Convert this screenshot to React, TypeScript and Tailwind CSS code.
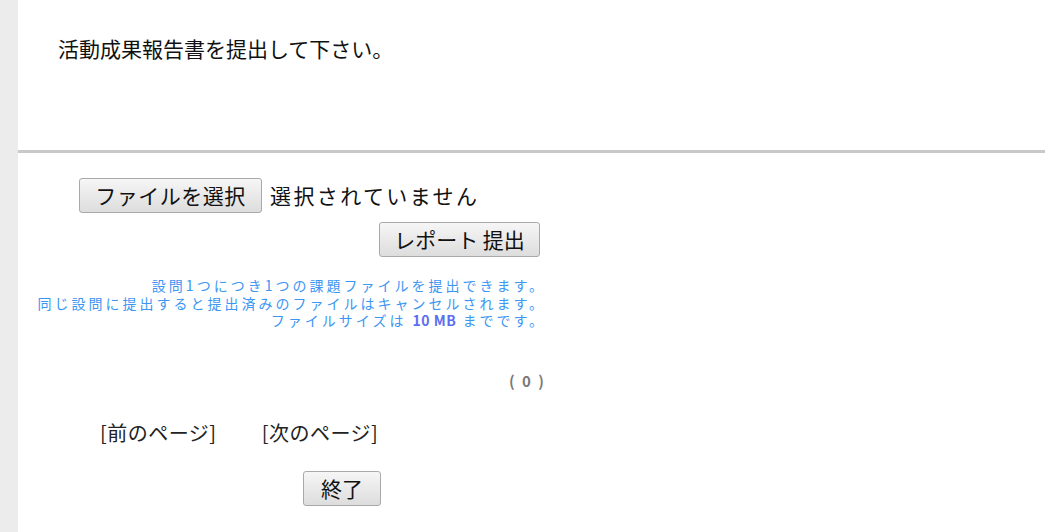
import React from "react";

const jp = { fontFamily: '"Noto Sans CJK JP", "Noto Sans", sans-serif' };

function Btn({ children, className = "" }: { children: React.ReactNode; className?: string }) {
  return (
    <button
      type="button"
      style={jp}
      className={
        "h-[35px] rounded-[3px] border border-[#a9a9a9] bg-gradient-to-b from-[#f6f6f6] to-[#dddddd] text-[21px] leading-none text-[#111] " +
        className
      }
    >
      {children}
    </button>
  );
}

export default function App() {
  return (
    <div className="flex min-h-[532px] w-[1045px] bg-white" style={jp}>
      <div className="w-[18px] shrink-0 bg-[#ececec]" />
      <div className="flex-1">
        <div className="h-[150px] pl-[40px] pt-[34px] text-[21px] leading-[28px] text-[#111]">
          活動成果報告書を提出して下さい。
        </div>
        <div className="h-[3px] bg-[#c9c9c9]" />
        <div className="w-[528px]">
          <div className="mt-[25px] flex items-center pl-[61px]">
            <Btn className="w-[183px] tracking-[0.5px]">ファイルを選択</Btn>
            <span className="ml-[8px] text-[21px] tracking-[2.4px] text-[#111]">選択されていません</span>
          </div>
          <div className="mt-[9px] flex justify-end pr-[6px]">
            <Btn className="w-[161px]">レポート 提出</Btn>
          </div>
          <div className="mt-[20px] text-right text-[14px] leading-[17.5px] tracking-[3px] text-[#3d96f2]">
            <div>設問1つにつき1つの課題ファイルを提出できます。</div>
            <div>同じ設問に提出すると提出済みのファイルはキャンセルされます。</div>
            <div>
              ファイルサイズは <span className="font-bold tracking-[0.5px] text-[#5c6ef0]">10 MB</span> までです。
            </div>
          </div>
          <div className="mt-[42px] text-right text-[15px] font-bold leading-[18px] tracking-[2px] text-[#7a7a7a]">
            ( 0 )
          </div>
          <div className="mt-[31px] flex pl-[82px] text-[20px] leading-[24px] tracking-[0.5px] text-[#222]">
            <span>[前のページ]</span>
            <span className="ml-[45px]">[次のページ]</span>
          </div>
          <div className="mt-[26px] pl-[285px]">
            <Btn className="w-[78px]">終了</Btn>
          </div>
        </div>
      </div>
    </div>
  );
}
